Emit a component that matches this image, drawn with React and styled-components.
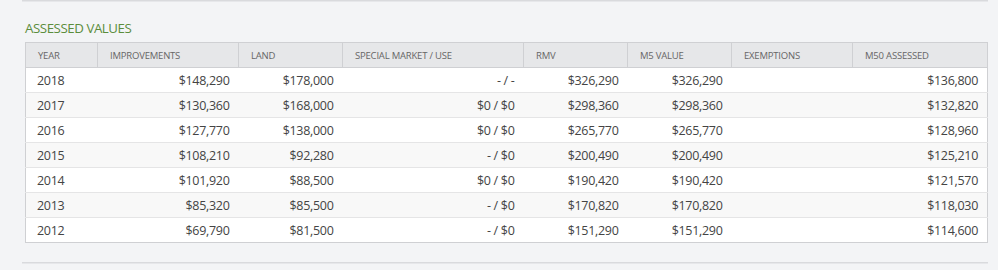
import React from "react";
import styled, { createGlobalStyle } from "styled-components";

const Global = createGlobalStyle`
  html, body { margin: 0; padding: 0; background: #f3f4f6; }
  body { font-family: "Open Sans", "Liberation Sans", sans-serif; }
`;

const Page = styled.div`
  width: 998px;
  height: 270px;
  padding: 0 10px 0 22px;
  box-sizing: border-box;
  display: flex;
  flex-direction: column;
`;

const Rule = styled.div`
  height: 0;
  border-top: 1px solid #d9dadd;
  border-bottom: 1px solid #e6e7ea;
`;

const Section = styled.section`
  padding: 0 0 0 3px;
  height: 260px;
  box-sizing: border-box;
`;

const Title = styled.h2`
  margin: 0;
  padding-top: 17px;
  height: 40px;
  box-sizing: border-box;
  font-size: 13.3px;
  font-weight: 400;
  line-height: 18px;
  color: #5b8d3c;
  letter-spacing: -0.45px;
`;

const Table = styled.table`
  width: 962px;
  border-collapse: collapse;
  table-layout: fixed;
  border: 1px solid #cfd0d3;
  background: #fff;
`;

const Th = styled.th`
  height: 24px;
  padding: 0 0 0 12px;
  background: #e6e7e9;
  border: 1px solid #cfd0d3;
  font-size: 9.5px;
  font-weight: 400;
  color: #666;
  letter-spacing: -0.2px;
  text-align: left;
  text-transform: uppercase;
  white-space: nowrap;
`;

const Tr = styled.tr`
  background: ${(p) => (p.$alt ? "#f8f8f8" : "#fff")};
  border-top: 1px solid #e5e5e6;
`;

const Td = styled.td`
  height: 24px;
  padding: ${(p) => (p.$left ? "0 0 0 11px" : "0 9px 0 0")};
  text-align: ${(p) => (p.$left ? "left" : "right")};
  font-size: 12.5px;
  letter-spacing: -0.3px;
  color: #444;
  white-space: nowrap;
`;

const columns = [
  { label: "Year", width: 72 },
  { label: "Improvements", width: 141 },
  { label: "Land", width: 104 },
  { label: "Special Market / Use", width: 181 },
  { label: "RMV", width: 104 },
  { label: "M5 Value", width: 104 },
  { label: "Exemptions", width: 121 },
  { label: "M50 Assessed", width: 135 },
];

const rows = [
  ["2018", "$148,290", "$178,000", "- / -", "$326,290", "$326,290", "", "$136,800"],
  ["2017", "$130,360", "$168,000", "$0 / $0", "$298,360", "$298,360", "", "$132,820"],
  ["2016", "$127,770", "$138,000", "$0 / $0", "$265,770", "$265,770", "", "$128,960"],
  ["2015", "$108,210", "$92,280", "- / $0", "$200,490", "$200,490", "", "$125,210"],
  ["2014", "$101,920", "$88,500", "$0 / $0", "$190,420", "$190,420", "", "$121,570"],
  ["2013", "$85,320", "$85,500", "- / $0", "$170,820", "$170,820", "", "$118,030"],
  ["2012", "$69,790", "$81,500", "- / $0", "$151,290", "$151,290", "", "$114,600"],
];

export default function App() {
  return (
    <Page>
      <Global />
      <Rule />
      <Section>
        <Title>ASSESSED VALUES</Title>
        <Table>
          <colgroup>
            {columns.map((c) => (
              <col key={c.label} style={{ width: c.width }} />
            ))}
          </colgroup>
          <thead>
            <tr>
              {columns.map((c) => (
                <Th key={c.label}>{c.label}</Th>
              ))}
            </tr>
          </thead>
          <tbody>
            {rows.map((r, i) => (
              <Tr key={r[0]} $alt={i % 2 === 1}>
                {r.map((v, j) => (
                  <Td key={j} $left={j === 0}>
                    {v}
                  </Td>
                ))}
              </Tr>
            ))}
          </tbody>
        </Table>
      </Section>
      <Rule />
    </Page>
  );
}
